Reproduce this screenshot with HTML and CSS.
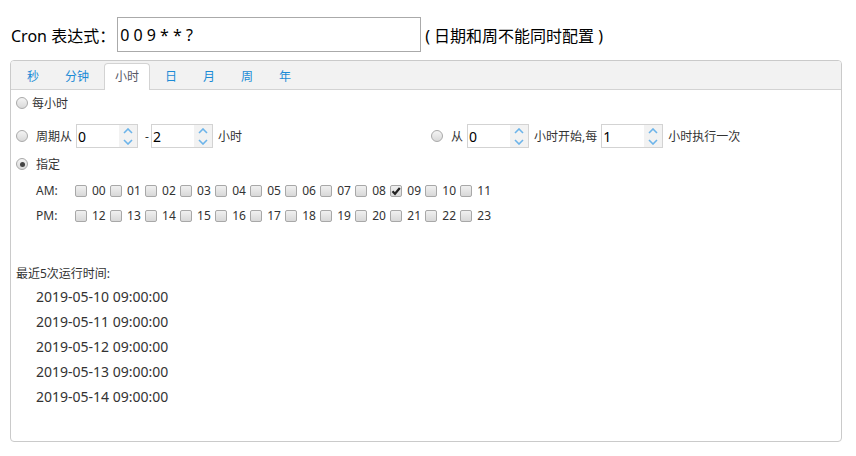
FILE: index.html
```html
<!DOCTYPE html>
<html lang="zh-CN">
<head>
  <meta charset="UTF-8">
  <title>Cron 表达式生成器</title>
  <link rel="stylesheet" href="styles.css">
</head>
<body>
  <div class="cron-line">
    <span class="cron-label">Cron 表达式：</span>
    <input class="cron-input" type="text" value="0 0 9 * * ?">
    <span class="cron-tip">( 日期和周不能同时配置 )</span>
  </div>

  <div class="panel">
    <ul class="tabs">
      <li>秒</li>
      <li>分钟</li>
      <li class="active">小时</li>
      <li>日</li>
      <li>月</li>
      <li>周</li>
      <li>年</li>
    </ul>

    <div class="tab-body">
      <div class="row row-every">
        <span class="radio"></span>
        <span class="txt gap-sm">每小时</span>
      </div>

      <div class="row row-range">
        <div class="cell">
          <span class="radio"></span>
          <span class="txt gap-lg">周期从</span>
          <span class="spinner"><input class="spinner-text" type="text" value="0"><span class="spinner-arrow"><svg width="10" height="6" viewBox="0 0 10 6"><path d="M1 5 L5 1 L9 5" fill="none" stroke="#6cb4ea" stroke-width="1.6"/></svg><svg width="10" height="6" viewBox="0 0 10 6"><path d="M1 1 L5 5 L9 1" fill="none" stroke="#6cb4ea" stroke-width="1.6"/></svg></span></span>
          <span class="txt dash">-</span>
          <span class="spinner"><input class="spinner-text" type="text" value="2"><span class="spinner-arrow"><svg width="10" height="6" viewBox="0 0 10 6"><path d="M1 5 L5 1 L9 5" fill="none" stroke="#6cb4ea" stroke-width="1.6"/></svg><svg width="10" height="6" viewBox="0 0 10 6"><path d="M1 1 L5 5 L9 1" fill="none" stroke="#6cb4ea" stroke-width="1.6"/></svg></span></span>
          <span class="txt after">小时</span>
        </div>
        <div class="cell">
          <span class="radio"></span>
          <span class="txt gap-lg">从</span>
          <span class="spinner"><input class="spinner-text" type="text" value="0"><span class="spinner-arrow"><svg width="10" height="6" viewBox="0 0 10 6"><path d="M1 5 L5 1 L9 5" fill="none" stroke="#6cb4ea" stroke-width="1.6"/></svg><svg width="10" height="6" viewBox="0 0 10 6"><path d="M1 1 L5 5 L9 1" fill="none" stroke="#6cb4ea" stroke-width="1.6"/></svg></span></span>
          <span class="txt after">小时开始,每</span>
          <span class="spinner"><input class="spinner-text" type="text" value="1"><span class="spinner-arrow"><svg width="10" height="6" viewBox="0 0 10 6"><path d="M1 5 L5 1 L9 5" fill="none" stroke="#6cb4ea" stroke-width="1.6"/></svg><svg width="10" height="6" viewBox="0 0 10 6"><path d="M1 1 L5 5 L9 1" fill="none" stroke="#6cb4ea" stroke-width="1.6"/></svg></span></span>
          <span class="txt after">小时执行一次</span>
        </div>
      </div>

      <div class="row row-assign">
        <span class="radio checked"></span>
        <span class="txt gap-lg">指定</span>
      </div>

      <div class="hours">
        <span class="ampm">AM:</span>
        <label class="hour"><span class="check"></span>00</label>
        <label class="hour"><span class="check"></span>01</label>
        <label class="hour"><span class="check"></span>02</label>
        <label class="hour"><span class="check"></span>03</label>
        <label class="hour"><span class="check"></span>04</label>
        <label class="hour"><span class="check"></span>05</label>
        <label class="hour"><span class="check"></span>06</label>
        <label class="hour"><span class="check"></span>07</label>
        <label class="hour"><span class="check"></span>08</label>
        <label class="hour"><span class="check checked"><svg width="10" height="10" viewBox="0 0 10 10"><path d="M1.5 5.2 L4 7.8 L8.8 2" fill="none" stroke="#222" stroke-width="2.2"/></svg></span>09</label>
        <label class="hour"><span class="check"></span>10</label>
        <label class="hour"><span class="check"></span>11</label>
      </div>
      <div class="hours">
        <span class="ampm">PM:</span>
        <label class="hour"><span class="check"></span>12</label>
        <label class="hour"><span class="check"></span>13</label>
        <label class="hour"><span class="check"></span>14</label>
        <label class="hour"><span class="check"></span>15</label>
        <label class="hour"><span class="check"></span>16</label>
        <label class="hour"><span class="check"></span>17</label>
        <label class="hour"><span class="check"></span>18</label>
        <label class="hour"><span class="check"></span>19</label>
        <label class="hour"><span class="check"></span>20</label>
        <label class="hour"><span class="check"></span>21</label>
        <label class="hour"><span class="check"></span>22</label>
        <label class="hour"><span class="check"></span>23</label>
      </div>

      <div class="recent-title">最近5次运行时间:</div>
      <ul class="recent-list">
        <li>2019-05-10 09:00:00</li>
        <li>2019-05-11 09:00:00</li>
        <li>2019-05-12 09:00:00</li>
        <li>2019-05-13 09:00:00</li>
        <li>2019-05-14 09:00:00</li>
      </ul>
    </div>
  </div>
</body>
</html>
```

FILE: styles.css
```css
* {
  margin: 0;
  padding: 0;
  box-sizing: border-box;
}
body {
  font-family: "Noto Sans", "Noto Sans CJK SC", sans-serif;
  color: #333;
  background: #fff;
  padding: 0 14px 0 10px;
}

/* 表达式 */
.cron-line {
  display: flex;
  align-items: center;
  height: 35px;
  margin-top: 17px;
  font-size: 16px;
  color: #000;
}
.cron-label {
  padding-left: 1px;
  margin-right: 2px;
}
.cron-input {
  width: 304px;
  height: 35px;
  border: 1px solid #aaa;
  padding: 0 2px;
  font-family: inherit;
  font-size: 16px;
  color: #000;
  outline: none;
}
.cron-tip {
  margin-left: 4px;
}

/* 面板 */
.panel {
  margin-top: 8px;
  border: 1px solid #cacaca;
  border-radius: 4px;
  overflow: hidden;
}
.tabs {
  list-style: none;
  display: flex;
  align-items: flex-end;
  height: 29px;
  padding: 2px 0 0 5px;
  background: #f2f2f2;
  border-bottom: 1px solid #d3d3d3;
}
.tabs li {
  height: 27px;
  line-height: 26px;
  padding: 0 10px;
  margin: 0 4px -1px 0;
  border: 1px solid transparent;
  border-bottom: none;
  border-radius: 4px 4px 0 0;
  font-size: 12px;
  color: #1b8bd6;
}
.tabs li.active {
  background: #fff;
  border-color: #d3d3d3;
  color: #575765;
}

.tab-body {
  padding: 2px 5px 32px;
  font-size: 12px;
}
.row {
  display: flex;
  align-items: center;
}
.row-every {
  height: 22px;
}
.row-range {
  display: grid;
  grid-template-columns: 415px auto;
  height: 28px;
  margin-top: 8px;
}
.row-range .cell {
  display: flex;
  align-items: center;
}
.row-assign {
  height: 28px;
}
.txt {
  white-space: nowrap;
}
.gap-sm {
  margin-left: 4px;
}
.gap-lg {
  margin-left: 8px;
}
.dash {
  margin: 0 2px 0 7px;
}
.after {
  margin-left: 5px;
}
.gap-lg + .spinner {
  margin-left: 4px;
}
.after + .spinner {
  margin-left: 4px;
}

/* 单选框 */
.radio {
  width: 12px;
  height: 12px;
  border-radius: 50%;
  border: 1px solid #a9a9a9;
  background: linear-gradient(#f4f4f4, #d9d9d9);
  display: inline-flex;
  align-items: center;
  justify-content: center;
  flex-shrink: 0;
}
.radio.checked::after {
  content: "";
  width: 5px;
  height: 5px;
  border-radius: 50%;
  background: #444;
}

/* 数字输入 */
.spinner {
  display: inline-flex;
  width: 62px;
  height: 24px;
  border: 1px solid #d3d3d3;
  background: #fff;
}
.spinner-text {
  width: 42px;
  border: none;
  outline: none;
  padding-left: 1px;
  font-family: inherit;
  font-size: 14px;
  color: #000;
  background: #fff;
}
.spinner-arrow {
  width: 18px;
  background: #f2f2f2;
  display: flex;
  flex-direction: column;
  align-items: center;
  justify-content: center;
  gap: 5px;
}
.spinner-arrow svg {
  display: block;
}

/* 小时复选 */
.hours {
  display: flex;
  align-items: center;
  height: 25px;
  padding-left: 20px;
}
.ampm {
  width: 39px;
}
.hour {
  display: inline-flex;
  align-items: center;
  margin-right: 4.3px;
}
.check {
  width: 12px;
  height: 12px;
  margin-right: 5px;
  border: 1px solid #a8a8a8;
  border-radius: 2px;
  background: linear-gradient(#f0f0f0, #d8d8d8);
  display: inline-flex;
  align-items: center;
  justify-content: center;
}

/* 最近运行时间 */
.recent-title {
  margin-top: 36px;
  line-height: 20px;
}
.recent-list {
  list-style: none;
  padding-left: 20px;
  font-size: 14px;
}
.recent-list li {
  line-height: 25px;
}
```
